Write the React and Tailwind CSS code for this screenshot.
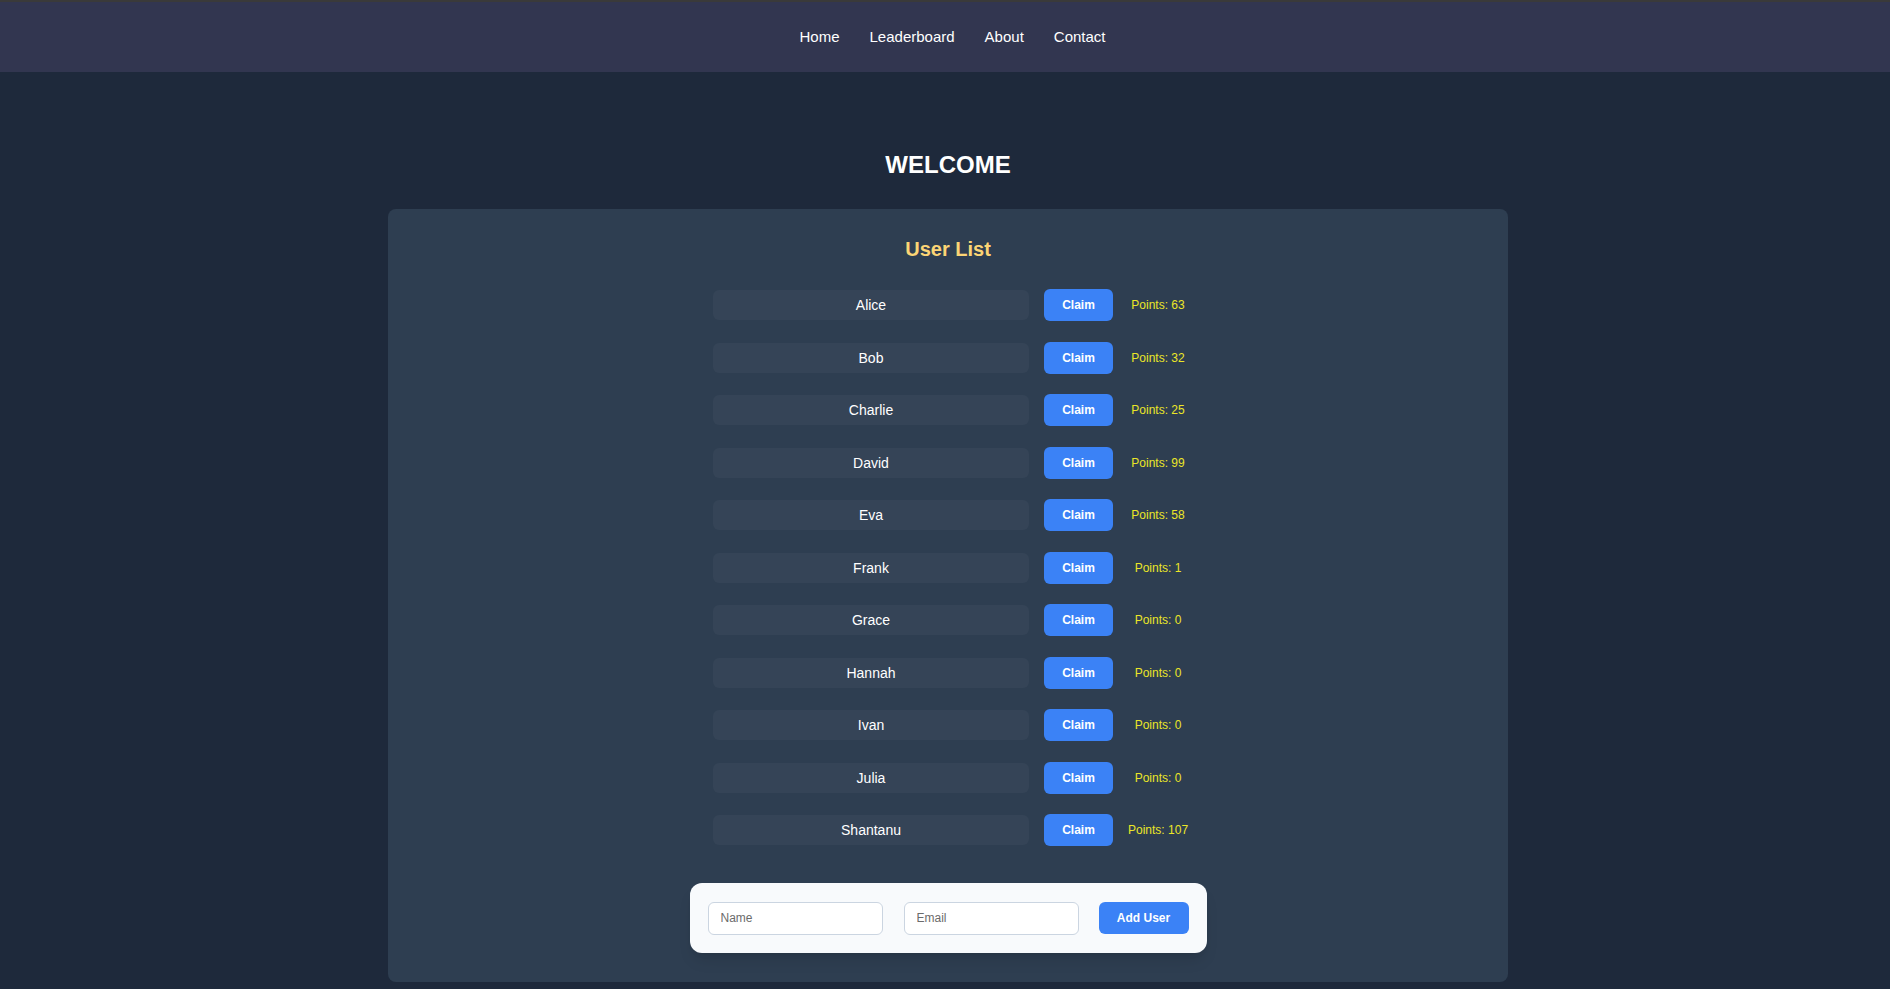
import React, { useState } from 'react'

const initialUsers = [
  { name: "Alice", points: 63 },
  { name: "Bob", points: 32 },
  { name: "Charlie", points: 25 },
  { name: "David", points: 99 },
  { name: "Eva", points: 58 },
  { name: "Frank", points: 1 },
  { name: "Grace", points: 0 },
  { name: "Hannah", points: 0 },
  { name: "Ivan", points: 0 },
  { name: "Julia", points: 0 },
  { name: "Shantanu", points: 107 },
]

function App() {
  const [users, setusers] = useState(initialUsers)
  const [name, setname] = useState("")
  const [email, setemail] = useState("")

  const claim = (index) => {
    setusers(users.map((u, i) => i === index ? { ...u, points: u.points + 1 } : u))
  }

  const addUser = () => {
    if (!name) return
    setusers([...users, { name, points: 0 }])
    setname("")
    setemail("")
  }

  return (
    <div className="min-h-screen bg-[#1e293b] font-['Liberation_Sans',Arial,sans-serif] pb-[8px]">
      <nav className="h-[72px] bg-[#323650] border-t-2 border-[#3a3a3a] flex items-center justify-center">
        <ul className="flex items-center gap-[30px] pl-[15px] text-[15px] text-white">
          <li>Home</li>
          <li>Leaderboard</li>
          <li>About</li>
          <li>Contact</li>
        </ul>
      </nav>

      <div className="flex flex-col items-center pl-[6px]">
        <h1 className="mt-[77px] text-2xl leading-8 font-bold text-white">WELCOME</h1>

        <div className="mt-[28px] w-[1120px] bg-[#2e3e51] rounded-lg pt-[26px] pb-[29px] flex flex-col items-center">
          <h2 className="text-xl leading-7 font-bold text-[#fcd575]">User List</h2>

          <div className="mt-[26px] flex flex-col gap-[20.5px] ml-[5px]">
            {users.map((user, index) => (
              <div key={index} className="flex items-center gap-[15px] h-[32px]">
                <div className="w-[316px] h-[30px] rounded-md bg-[#354457] flex items-center justify-center text-sm text-white">
                  {user.name}
                </div>
                <button onClick={() => claim(index)} className="w-[69px] h-[32px] rounded-md bg-[#3b82f6] text-white text-xs font-bold">
                  Claim
                </button>
                <p className="w-[60px] text-center text-xs text-[#ebe627] whitespace-nowrap">Points: {user.points}</p>
              </div>
            ))}
          </div>

          <div className="mt-[37px] w-[517px] h-[70px] bg-[#f8fafc] rounded-xl shadow-lg flex items-center px-[18px]">
            <input
              type="text"
              value={name}
              onChange={(e) => setname(e.target.value)}
              placeholder="Name"
              className="w-[175px] h-[33px] bg-white border border-[#cbd5e1] rounded-md pl-[12px] text-xs text-gray-800 placeholder:text-[#6b6b6b] outline-none"
            />
            <input
              type="text"
              value={email}
              onChange={(e) => setemail(e.target.value)}
              placeholder="Email"
              className="ml-[21px] w-[175px] h-[33px] bg-white border border-[#cbd5e1] rounded-md pl-[12px] text-xs text-gray-800 placeholder:text-[#6b6b6b] outline-none"
            />
            <button onClick={addUser} className="ml-[20px] w-[90px] h-[32px] rounded-md bg-[#3b82f6] text-white text-xs font-bold">
              Add User
            </button>
          </div>
        </div>
      </div>
    </div>
  )
}

export default App
